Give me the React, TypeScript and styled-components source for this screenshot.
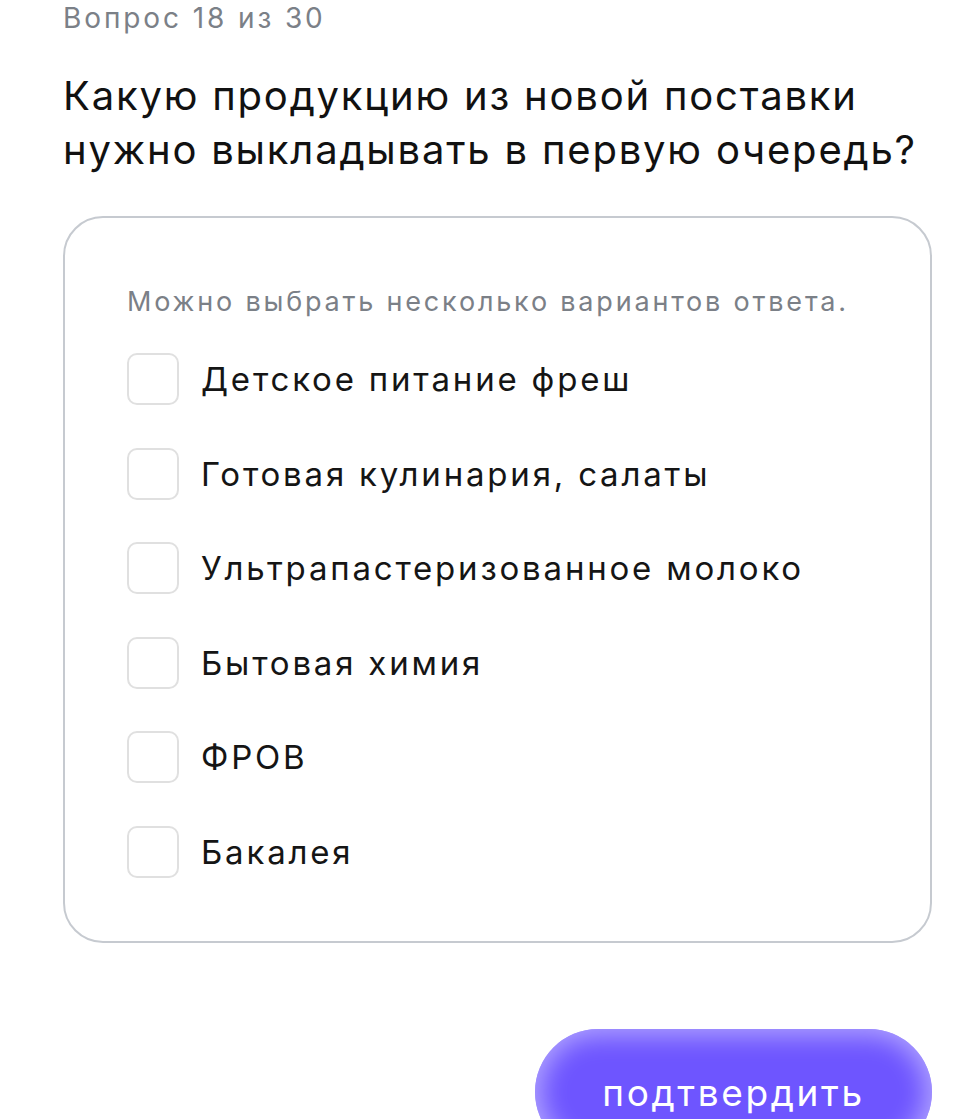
import styled, { createGlobalStyle } from 'styled-components';
import { useState } from 'react';

const GlobalStyle = createGlobalStyle`
    html, body {
        margin: 0;
        padding: 0;
        background: #fff;
    }
    body {
        font-family: Inter, "Noto Sans", sans-serif;
        color: #111;
        overflow: hidden;
    }
`

const Page = styled.main`
    width: 961px;
    height: 1119px;
    box-sizing: border-box;
    padding: 0 29px 0 63px;
    display: flex;
    flex-direction: column;
    overflow: hidden;
`

const Counter = styled.div`
    color: #7b8087;
    font-size: 28px;
    letter-spacing: 2.9px;
    line-height: 36px;
    height: 36px;
    flex-shrink: 0;
`

const Question = styled.h1`
    font-size: 40px;
    font-weight: 400;
    letter-spacing: 1.8px;
    line-height: 54px;
    margin: 33px 0 0;
    color: #111;
    flex-shrink: 0;
`

const Card = styled.section`
    margin-top: 39px;
    width: 869px;
    height: 727px;
    flex-shrink: 0;
    box-sizing: border-box;
    border: 2px solid #c6cad0;
    border-radius: 40px;
    padding: 64px 0 0 62px;
    display: flex;
    flex-direction: column;
`

const Hint = styled.p`
    margin: 0;
    color: #7b8087;
    font-size: 27px;
    letter-spacing: 2.8px;
    line-height: 40px;
`

const Options = styled.ul`
    list-style: none;
    margin: 31px 0 0;
    padding: 0;
    display: flex;
    flex-direction: column;
    gap: 42.6px;
`

const Option = styled.li`
    display: flex;
    align-items: center;
    gap: 22px;
    height: 52px;
    cursor: pointer;
`

const Box = styled.span<{ $checked: boolean }>`
    width: 52px;
    height: 52px;
    box-sizing: border-box;
    border: 2.5px solid ${p => p.$checked ? '#6e57ff' : '#e0e0e0'};
    background: ${p => p.$checked ? '#6e57ff' : '#fff'};
    border-radius: 10px;
    flex-shrink: 0;
`

const Label = styled.span`
    font-size: 33px;
    letter-spacing: 2.8px;
    color: #151515;
`

const Footer = styled.div`
    display: flex;
    justify-content: flex-end;
    margin-top: 86px;
    flex-shrink: 0;
`

const Confirm = styled.button`
    width: 397px;
    height: 126px;
    border: none;
    border-radius: 63px;
    background: #6e55ff;
    box-shadow: inset 0 0 26px 6px rgba(190, 180, 255, 0.85);
    color: #fff;
    font-family: inherit;
    font-size: 37px;
    letter-spacing: 2.6px;
    padding: 0;
    cursor: pointer;
`

const variants = [
    'Детское питание фреш',
    'Готовая кулинария, салаты',
    'Ультрапастеризованное молоко',
    'Бытовая химия',
    'ФРОВ',
    'Бакалея',
]

export default function App() {
    const [selected, setSelected] = useState<number[]>([]);

    function toggle(index: number) {
        setSelected(prev => prev.includes(index)
            ? prev.filter(i => i !== index)
            : [...prev, index]);
    }

    return (
        <Page>
            <GlobalStyle />
            <Counter>Вопрос 18 из 30</Counter>
            <Question>
                Какую продукцию из новой поставки<br />
                нужно выкладывать в первую очередь?
            </Question>

            <Card>
                <Hint>Можно выбрать несколько вариантов ответа.</Hint>
                <Options>
                    {variants.map((text, i) => (
                        <Option key={text} onClick={() => toggle(i)}>
                            <Box $checked={selected.includes(i)} />
                            <Label>{text}</Label>
                        </Option>
                    ))}
                </Options>
            </Card>

            <Footer>
                <Confirm>подтвердить</Confirm>
            </Footer>
        </Page>
    );
}
